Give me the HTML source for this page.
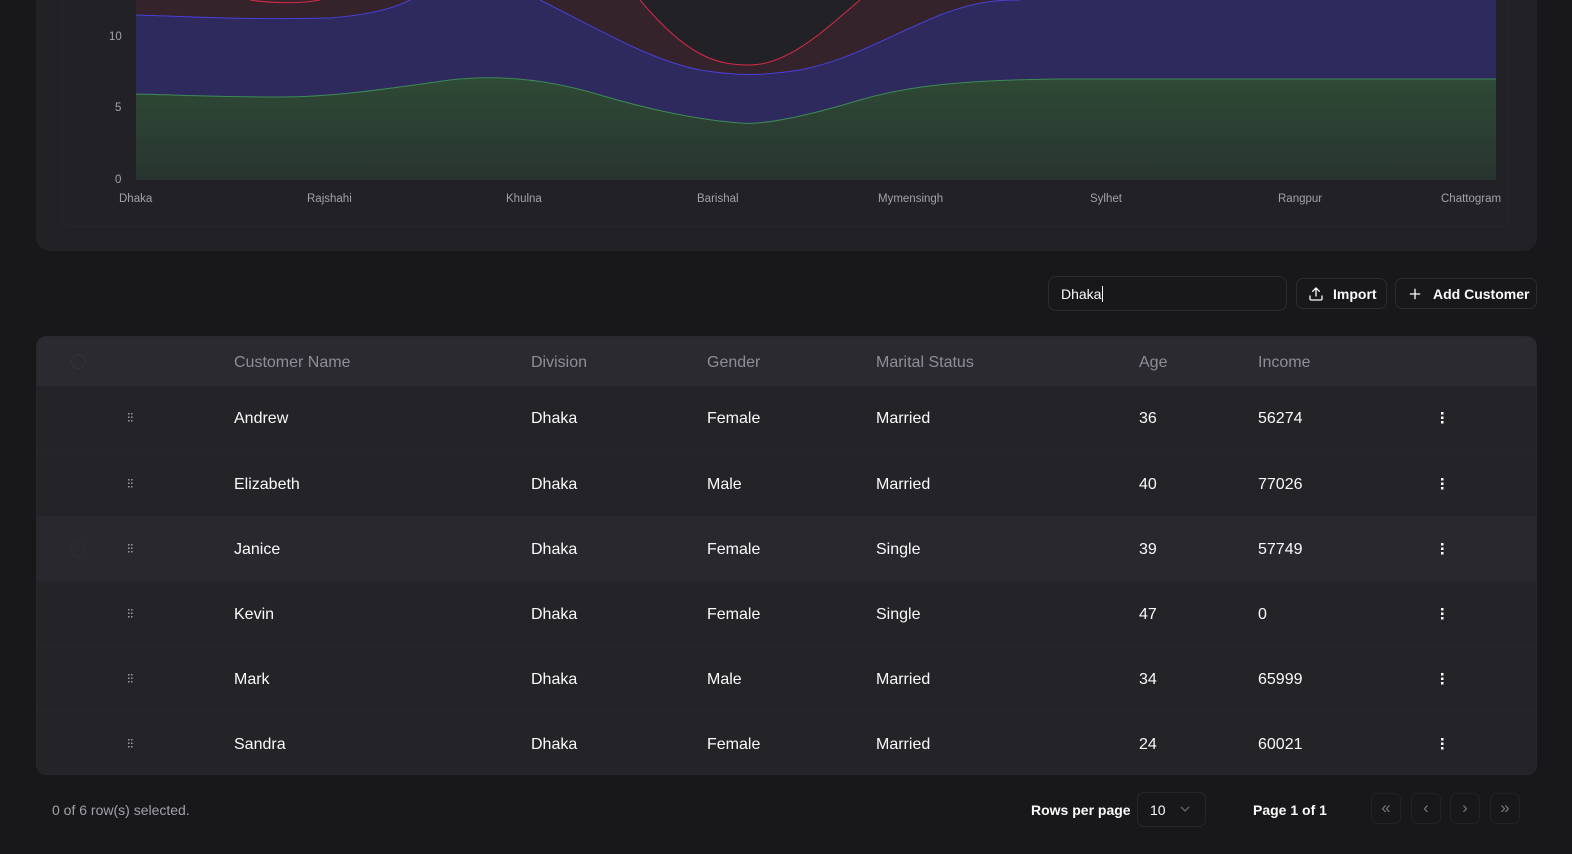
<!DOCTYPE html>
<html><head><meta charset="utf-8"><style>
*{margin:0;padding:0;box-sizing:border-box}
body{width:1572px;height:854px;background:#18181b;font-family:"Liberation Sans",sans-serif;color:#fafafa;position:relative;overflow:hidden}
.card{position:absolute;left:36px;top:-20px;width:1501px;height:271px;background:#222226;border-radius:0 0 14px 14px}
.inner{position:absolute;left:62px;top:-20px;width:1447px;height:247px;border:1px solid #26262b;border-radius:0 0 10px 10px}
.ax{position:absolute;font-size:11.5px;color:#a1a1aa}
.tbl{position:absolute;left:36px;top:336px;width:1501px;height:439px;background:#232328;border-radius:10px;overflow:hidden;border:1px solid #27272c}
.hdr{position:absolute;left:0;top:0;width:100%;height:49px;background:#2a2a30}
.row{position:absolute;left:0;width:100%;height:65px;border-top:1px solid #26262b}
.t{position:absolute;font-size:16px;white-space:nowrap}
.h{color:#8e8e96}
.btn{position:absolute;top:278px;height:31px;border:1px solid #2a2a30;border-radius:7px;font-size:14px;font-weight:bold;display:flex;align-items:center}
.pg{position:absolute;top:793px;width:30px;height:31px;border:1px solid #222227;border-radius:7px;color:#777;font-size:17px;text-align:center;line-height:28px}
</style></head><body>
<div class="card"></div><div class="inner"></div>
<svg style="position:absolute;left:0;top:0" width="1572" height="185">
<path d="M136,0 L1496,0 L1496,180 L136,180Z" fill="#222226"/>
<path d="M136,0 L640,0 C690,60 720,65 750,65 C790,65 830,25 860,0 L1496,0 L1496,79 C1300,79 1150,78 1060,79 C970,80 910,85 860,100 C800,118 760,125 740,123 C700,120 650,110 600,95 C550,80 500,74 450,80 C380,90 330,97 280,97 C220,97 180,95 136,94Z" fill="#35232c"/>
<path d="M136,15 C200,17 250,20 330,18 C380,14 400,5 410,0 L540,0 C600,30 650,60 700,70 C740,76 760,76 800,70 C850,60 880,40 940,15 C980,0 1000,0 1020,0 L1496,0 L1496,79 C1300,79 1150,78 1060,79 C970,80 910,85 860,100 C800,118 760,125 740,123 C700,120 650,110 600,95 C550,80 500,74 450,80 C380,90 330,97 280,97 C220,97 180,95 136,94Z" fill="#2e2a5e"/>
<path d="M136,15 C200,17 250,20 330,18 C380,14 400,5 410,0 M540,0 C600,30 650,60 700,70 C740,76 760,76 800,70 C850,60 880,40 940,15 C980,0 1000,0 1020,0" fill="none" stroke="#4a3fd6" stroke-width="1"/>
<path d="M250,0 C270,3 300,4 320,0 M640,0 C690,60 720,65 750,65 C790,65 830,25 860,0" fill="none" stroke="#d42a4a" stroke-width="1"/>
<defs><linearGradient id="g" x1="0" y1="0" x2="0" y2="1"><stop offset="0" stop-color="#2e4a35"/><stop offset="1" stop-color="#283430"/></linearGradient></defs>
<path d="M136,94 C180,95 220,97 280,97 C330,97 380,90 450,80 C500,74 550,80 600,95 C650,110 700,120 740,123 C760,125 800,118 860,100 C910,85 970,80 1060,79 C1150,78 1300,79 1496,79 L1496,180 L136,180Z" fill="url(#g)"/>
<path d="M136,94 C180,95 220,97 280,97 C330,97 380,90 450,80 C500,74 550,80 600,95 C650,110 700,120 740,123 C760,125 800,118 860,100 C910,85 970,80 1060,79 C1150,78 1300,79 1496,79" fill="none" stroke="#3d8a55" stroke-width="1"/>
</svg>
<div class="ax" style="left:109px;top:31px">10</div>
<div class="ax" style="left:115px;top:102px">5</div>
<div class="ax" style="left:115px;top:174px">0</div>
<div class="ax" style="left:119px;top:193px">Dhaka</div>
<div class="ax" style="left:307px;top:193px">Rajshahi</div>
<div class="ax" style="left:506px;top:193px">Khulna</div>
<div class="ax" style="left:697px;top:193px">Barishal</div>
<div class="ax" style="left:878px;top:193px">Mymensingh</div>
<div class="ax" style="left:1090px;top:193px">Sylhet</div>
<div class="ax" style="left:1278px;top:193px">Rangpur</div>
<div class="ax" style="left:1441px;top:193px">Chattogram</div>

<div style="position:absolute;left:1048px;top:276px;width:239px;height:35px;border:1px solid #2a2a30;border-radius:8px;font-size:14px;padding:9px 12px">Dhaka<span style="border-left:1px solid #fff;margin-left:1px"></span></div>
<div class="btn" style="left:1296px;width:91px;padding-left:11px"><svg width="16" height="16" viewBox="0 0 24 24" fill="none" stroke="#fafafa" stroke-width="2" stroke-linecap="round"><path d="M21 15v4a2 2 0 0 1-2 2H5a2 2 0 0 1-2-2v-4M17 8l-5-5-5 5M12 3v12"/></svg><span style="margin-left:9px">Import</span></div>
<div class="btn" style="left:1395px;width:142px;padding-left:11px"><svg width="16" height="16" viewBox="0 0 24 24" fill="none" stroke="#fafafa" stroke-width="2" stroke-linecap="round"><path d="M12 5v14M5 12h14"/></svg><span style="margin-left:10px">Add Customer</span></div>

<div class="tbl">
<div class="hdr">
<div style="position:absolute;left:34px;top:17px;width:15px;height:15px;border:1px solid #333339;border-radius:50%"></div>
<div class="t h" style="left:197px;top:17px">Customer Name</div>
<div class="t h" style="left:494px;top:17px">Division</div>
<div class="t h" style="left:670px;top:17px">Gender</div>
<div class="t h" style="left:839px;top:17px">Marital Status</div>
<div class="t h" style="left:1102px;top:17px">Age</div>
<div class="t h" style="left:1221px;top:17px">Income</div>
</div>
</div>
<script>
var d=[["Andrew","Female","Married","36","56274"],["Elizabeth","Male","Married","40","77026"],["Janice","Female","Single","39","57749"],["Kevin","Female","Single","47","0"],["Mark","Male","Married","34","65999"],["Sandra","Female","Married","24","60021"]];
var t=document.querySelector('.tbl'),h='';
d.forEach(function(r,i){var y=49+i*65;
h+='<div class="row" style="top:'+y+'px;'+(i==2?'background:#28282e':'')+(i==0?'border-top:none':'')+'">'+
(i==2?'<div style="position:absolute;left:34px;top:25px;width:15px;height:15px;border:1px solid #2e2e34;border-radius:50%"></div>':'')+
'<svg style="position:absolute;left:91px;top:27px" width="5" height="9"><g fill="#9a9aa2"><rect x="0" y="0" width="1.5" height="1.5"/><rect x="3" y="0" width="1.5" height="1.5"/><rect x="0" y="3.5" width="1.5" height="1.5"/><rect x="3" y="3.5" width="1.5" height="1.5"/><rect x="0" y="7" width="1.5" height="1.5"/><rect x="3" y="7" width="1.5" height="1.5"/></g></svg>'+
'<div class="t" style="left:197px;top:24px">'+r[0]+'</div><div class="t" style="left:494px;top:24px">Dhaka</div><div class="t" style="left:670px;top:24px">'+r[1]+'</div><div class="t" style="left:839px;top:24px">'+r[2]+'</div><div class="t" style="left:1102px;top:24px">'+r[3]+'</div><div class="t" style="left:1221px;top:24px">'+r[4]+'</div>'+
'<svg style="position:absolute;left:1404px;top:26px" width="3" height="12"><g fill="#fff"><rect x="0" y="0" width="2.5" height="2.5"/><rect x="0" y="4.5" width="2.5" height="2.5"/><rect x="0" y="9" width="2.5" height="2.5"/></g></svg></div>';});
t.insertAdjacentHTML('beforeend',h);
</script>
<div style="position:absolute;left:52px;top:802px;font-size:14px;color:#a1a1aa">0 of 6 row(s) selected.</div>
<div style="position:absolute;left:1031px;top:802px;font-size:14px;font-weight:bold">Rows per page</div>
<div style="position:absolute;left:1137px;top:792px;width:69px;height:35px;border:1px solid #26262b;border-radius:7px;font-size:14px;padding:9px 12px">10<svg style="position:absolute;left:42px;top:13px" width="10" height="6"><path d="M1 1l4 4 4-4" fill="none" stroke="#666" stroke-width="1.3"/></svg></div>
<div style="position:absolute;left:1253px;top:802px;font-size:14px;font-weight:bold">Page 1 of 1</div>
<div class="pg" style="left:1371px">&laquo;</div>
<div class="pg" style="left:1411px">&lsaquo;</div>
<div class="pg" style="left:1450px">&rsaquo;</div>
<div class="pg" style="left:1490px">&raquo;</div>
</body></html>
